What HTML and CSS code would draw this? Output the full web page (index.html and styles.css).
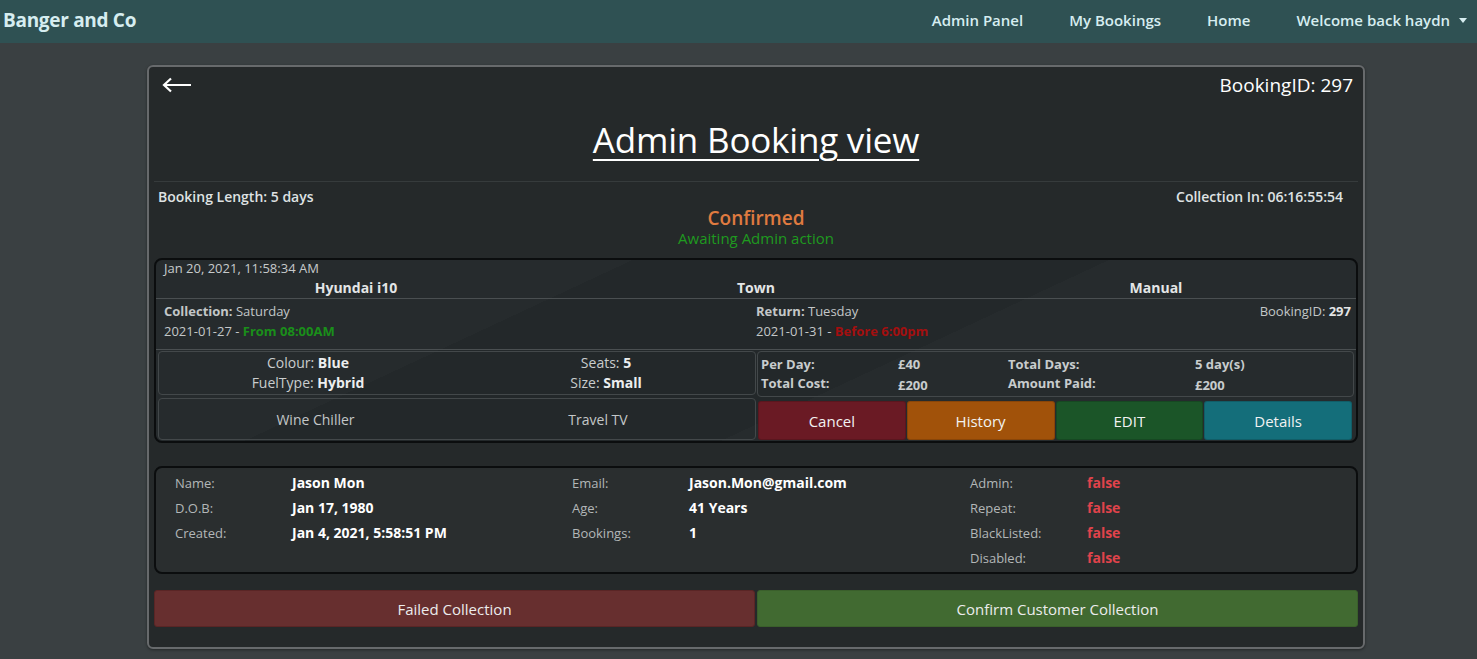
FILE: index.html
```html
<!DOCTYPE html>
<html lang="en">
<head>
<meta charset="utf-8">
<title>Admin Booking view</title>
<link rel="stylesheet" href="styles.css">
</head>
<body>
<nav class="navbar">
  <a class="brand" href="#">Banger and Co</a>
  <ul class="nav-links">
    <li><a href="#">Admin Panel</a></li>
    <li><a href="#">My Bookings</a></li>
    <li><a href="#">Home</a></li>
    <li><a href="#" class="dropdown">Welcome back haydn<span class="caret"></span></a></li>
  </ul>
</nav>

<main class="page">
  <section class="panel">
    <header class="panel-head">
      <div class="top-row">
        <a href="#" class="back" aria-label="Back">
          <svg width="30" height="16" viewBox="0 0 30 16"><path d="M2 8H29M9 1.5L2 8L9 14.5" fill="none" stroke="#fff" stroke-width="2.2"/></svg>
        </a>
        <span class="top-id">BookingID: 297</span>
      </div>
      <h1 class="title">Admin Booking view</h1>
    </header>

    <div class="info-row">
      <span>Booking Length: 5 days</span>
      <span>Collection In: 06:16:55:54</span>
    </div>
    <div class="status">Confirmed</div>
    <div class="substatus">Awaiting Admin action</div>

    <div class="booking">
      <div class="stamp">Jan 20, 2021, 11:58:34 AM</div>
      <div class="car-row">
        <span>Hyundai i10</span>
        <span>Town</span>
        <span>Manual</span>
      </div>
      <div class="dates">
        <div class="date-col">
          <div><b>Collection:</b> Saturday</div>
          <div>2021-01-27 - <b class="green">From 08:00AM</b></div>
        </div>
        <div class="date-col split">
          <div>
            <div><b>Return:</b> Tuesday</div>
            <div>2021-01-31 - <b class="red">Before 6:00pm</b></div>
          </div>
          <div>BookingID: <b class="light">297</b></div>
        </div>
      </div>
      <div class="lower">
        <div class="lower-left">
          <div class="box specs">
            <div class="spec-col">
              <div>Colour: <b>Blue</b></div>
              <div>FuelType: <b>Hybrid</b></div>
            </div>
            <div class="spec-col">
              <div>Seats: <b>5</b></div>
              <div>Size: <b>Small</b></div>
            </div>
          </div>
          <div class="box extras">
            <span>Wine Chiller</span>
            <span>Travel TV</span>
          </div>
        </div>
        <div class="lower-right">
          <div class="box prices">
            <span>Per Day:</span><span>£40</span><span>Total Days:</span><span>5 day(s)</span>
            <span>Total Cost:</span><span class="low">£200</span><span>Amount Paid:</span><span class="low">£200</span>
          </div>
          <div class="actions">
            <button class="btn btn-cancel">Cancel</button>
            <button class="btn btn-history">History</button>
            <button class="btn btn-edit">EDIT</button>
            <button class="btn btn-details">Details</button>
          </div>
        </div>
      </div>
    </div>

    <div class="user">
      <dl class="user-col">
        <dt>Name:</dt><dd>Jason Mon</dd>
        <dt>D.O.B:</dt><dd>Jan 17, 1980</dd>
        <dt>Created:</dt><dd>Jan 4, 2021, 5:58:51 PM</dd>
      </dl>
      <dl class="user-col">
        <dt>Email:</dt><dd>Jason.Mon@gmail.com</dd>
        <dt>Age:</dt><dd>41 Years</dd>
        <dt>Bookings:</dt><dd>1</dd>
      </dl>
      <dl class="user-col">
        <dt>Admin:</dt><dd class="false">false</dd>
        <dt>Repeat:</dt><dd class="false">false</dd>
        <dt>BlackListed:</dt><dd class="false">false</dd>
        <dt>Disabled:</dt><dd class="false">false</dd>
      </dl>
    </div>

    <div class="bottom-actions">
      <button class="wide wide-fail">Failed Collection</button>
      <button class="wide wide-ok">Confirm Customer Collection</button>
    </div>
  </section>
</main>
</body>
</html>
```

FILE: styles.css
```css
* { box-sizing: border-box; }

html, body {
  margin: 0;
  padding: 0;
}

body {
  background: #3a4042;
  font-family: "Open Sans", "Noto Sans", sans-serif;
  color: #dfe2e3;
  height: 659px;
  overflow: hidden;
}

a { text-decoration: none; color: inherit; }

/* NAVBAR */
.navbar {
  height: 43px;
  background: #2f5153;
  display: flex;
  align-items: center;
  justify-content: space-between;
  padding: 0 6px 4px 3px;
}
.brand {
  font-size: 19px;
  font-weight: 700;
  color: #d6edf0;
  letter-spacing: -0.3px;
}
.nav-links {
  display: flex;
  list-style: none;
  margin: 0;
  padding: 0;
}
.nav-links a {
  display: block;
  font-size: 15px;
  font-weight: 600;
  color: #d6edf0;
  padding: 0 23px;
}
.nav-links li:last-child a { padding-right: 4px; }
.caret {
  display: inline-block;
  width: 0;
  height: 0;
  margin-left: 9px;
  vertical-align: 3px;
  border-left: 4px solid transparent;
  border-right: 4px solid transparent;
  border-top: 5px solid #d6edf0;
}

/* PAGE */
.page {
  padding: 22px 112px 0 147px;
}
.panel {
  background: #25292a;
  border: 2px solid #676a6c;
  border-radius: 6px;
  padding: 0 5px 20px;
  box-shadow: 0 1px 3px rgba(0,0,0,0.4);
}
.panel-head {
  border-bottom: 1px solid #363b3c;
}
.top-row {
  height: 35px;
  display: flex;
  justify-content: space-between;
  align-items: center;
  padding: 0 5px 0 8px;
}
.back { display: flex; align-items: center; }
.top-id {
  font-size: 19px;
  color: #ffffff;
}
.title {
  margin: 16px 0 19px;
  text-align: center;
  font-size: 35px;
  font-weight: 400;
  line-height: 44px;
  color: #ffffff;
  letter-spacing: -0.2px;
  text-decoration: underline;
  text-underline-offset: 6px;
  text-decoration-thickness: 2px;
}

.info-row {
  display: flex;
  justify-content: space-between;
  padding: 5px 15px 0 4px;
  font-size: 14px;
  font-weight: 600;
  line-height: 20px;
  color: #dfe2e3;
}
.status {
  text-align: center;
  font-size: 19px;
  font-weight: 600;
  line-height: 22px;
  color: #e07b40;
}
.substatus {
  text-align: center;
  font-size: 15px;
  line-height: 18px;
  color: #1f9a1f;
  margin-bottom: 11px;
}

/* BOOKING CARD */
.booking {
  border: 2px solid #0b0d0e;
  border-radius: 8px;
  background:
    linear-gradient(155deg, rgba(255,255,255,0.015) 0 30%, transparent 30% 60%, rgba(255,255,255,0.015) 60%),
    #23282a;
  overflow: hidden;
}
.stamp {
  font-size: 13px;
  line-height: 17px;
  padding: 0 8px;
  color: #c6cacb;
}
.car-row {
  display: grid;
  grid-template-columns: 1fr 1fr 1fr;
  text-align: center;
  font-size: 14px;
  font-weight: 700;
  line-height: 21px;
  color: #e3e5e6;
  border-bottom: 1px solid #4a4f51;
}
.dates {
  display: grid;
  grid-template-columns: 1fr 1fr;
  font-size: 13px;
  line-height: 20px;
  padding: 2px 0 8px;
  color: #c3c7c8;
  border-bottom: 1px solid #4a4f51;
}
.date-col { padding-left: 8px; }
.date-col.split {
  display: flex;
  justify-content: space-between;
  padding-left: 0;
  padding-right: 5px;
}
.dates b { font-weight: 700; }
.green { color: #1a8f1a; }
.red { color: #a40f0f; }
.light { color: #e3e5e6; }

.lower {
  display: grid;
  grid-template-columns: 1fr 1fr;
  padding: 1px 0 1px;
}
.lower-left {
  display: flex;
  flex-direction: column;
  gap: 3px;
  padding: 0 0 0 2px;
}
.box {
  border: 1px solid #43484a;
  border-radius: 4px;
}
.specs {
  height: 44px;
  display: grid;
  grid-template-columns: 1fr 1fr;
  text-align: center;
  font-size: 14px;
  line-height: 20px;
  padding-top: 1px;
  color: #c9cdce;
}
.specs b { color: #eceeef; font-weight: 700; }
.extras {
  height: 42px;
  display: grid;
  grid-template-columns: 1fr 1fr;
  align-items: center;
  text-align: center;
  font-size: 14px;
  color: #c3c7c8;
}
.extras span:first-child { padding-left: 15px; }
.extras span:last-child { padding-right: 16px; }

.lower-right {
  display: flex;
  flex-direction: column;
  gap: 4px;
  padding: 0 2px 0 1px;
}
.prices {
  height: 46px;
  display: grid;
  grid-template-columns: 137px 110px 187px 1fr;
  align-content: center;
  padding-left: 3px;
  font-size: 13px;
  font-weight: 700;
  line-height: 19px;
  color: #c8cccd;
}
.prices .low { transform: translateY(2px); }
.actions {
  display: grid;
  grid-template-columns: 1fr 1fr 1fr 1fr;
  gap: 1px;
  padding: 0 2px 0 1px;
}
.btn {
  height: 39px;
  border: 1px solid rgba(0,0,0,0.15);
  border-radius: 3px;
  font-family: inherit;
  font-size: 15px;
  color: #f2f2f2;
  cursor: pointer;
}
.btn-cancel { background: #6a1a24; }
.btn-history { background: #a1520a; }
.btn-edit { background: #1b5528; }
.btn-details { background: #146e7a; }

/* USER CARD */
.user {
  margin-top: 23px;
  border: 2px solid #0b0d0e;
  border-radius: 8px;
  background: #2a2e2f;
  display: grid;
  grid-template-columns: 397px 398px 1fr;
  padding: 2px 0 2px 19px;
  min-height: 107px;
}
.user-col {
  margin: 0;
  display: grid;
  grid-template-columns: 117px 1fr;
  grid-auto-rows: 25px;
  align-items: center;
}
.user-col dt {
  font-size: 13px;
  color: #b3b7b8;
}
.user-col dd {
  margin: 0;
  font-size: 14px;
  font-weight: 700;
  color: #ffffff;
}
.user-col dd.false { color: #e0434b; }

/* BOTTOM */
.bottom-actions {
  margin-top: 16px;
  display: grid;
  grid-template-columns: 1fr 1fr;
  gap: 2px;
}
.wide {
  height: 37px;
  border-radius: 3px;
  font-family: inherit;
  font-size: 15px;
  color: #ececec;
  cursor: pointer;
}
.wide-fail { background: #672f2f; border: 1px solid #5a2525; }
.wide-ok { background: #416a31; border: 1px solid #3a5f2b; }
```
